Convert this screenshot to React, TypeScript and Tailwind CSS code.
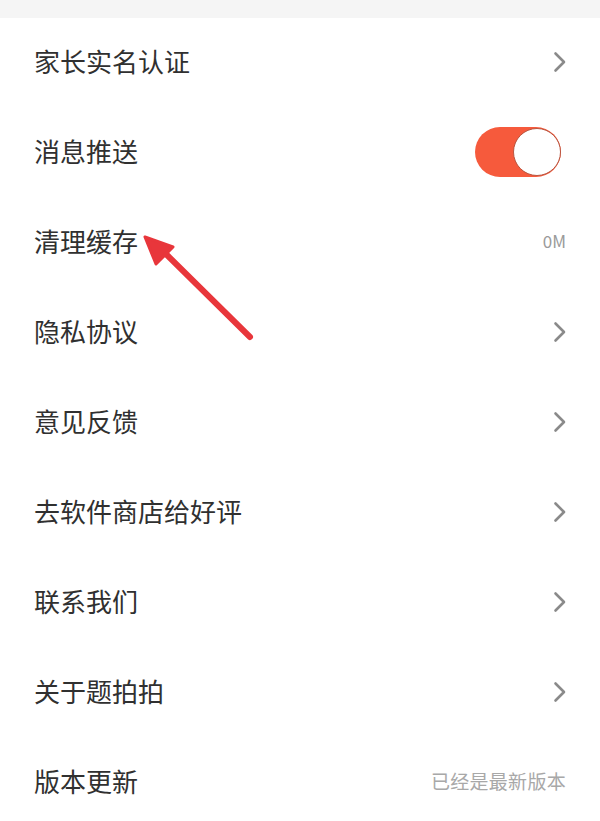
import React from "react";

type Row = {
  label: string;
  kind: "chevron" | "toggle" | "value";
  value?: string;
};

const rows: Row[] = [
  { label: "家长实名认证", kind: "chevron" },
  { label: "消息推送", kind: "toggle" },
  { label: "清理缓存", kind: "value", value: "0M" },
  { label: "隐私协议", kind: "chevron" },
  { label: "意见反馈", kind: "chevron" },
  { label: "去软件商店给好评", kind: "chevron" },
  { label: "联系我们", kind: "chevron" },
  { label: "关于题拍拍", kind: "chevron" },
  { label: "版本更新", kind: "value", value: "已经是最新版本" },
];

function Chevron() {
  return (
    <svg width="14" height="22" viewBox="0 0 14 22" className="mr-[-1px] mb-[2px]">
      <path
        d="M2.5 2.5 L11 11 L2.5 19.5"
        fill="none"
        stroke="#8a8a8a"
        strokeWidth="2.6"
        strokeLinecap="round"
        strokeLinejoin="round"
      />
    </svg>
  );
}

function Toggle() {
  return (
    <div className="flex h-[50px] w-[86px] items-center justify-end rounded-full bg-[#f65a3c] mr-[5px] mb-[2px]">
      <div className="h-[48px] w-[48px] rounded-full border-[1.5px] border-[#b9553f] bg-white" />
    </div>
  );
}

function RowItem({ row, index }: { row: Row; index: number }) {
  const last = index === rows.length - 1;
  return (
    <div className="relative flex h-[90px] shrink-0 items-center justify-between pl-[34px] pr-[34px]">
      <span className="-mt-[5px] text-[26px] text-[#303030]">{row.label}</span>
      {row.kind === "chevron" && <Chevron />}
      {row.kind === "toggle" && <Toggle />}
      {row.kind === "value" && (
        <span
          className={
            last
              ? "-mt-[4px] text-[19px] text-[#a8a8a8] tracking-[0.3px]"
              : "-mt-[4px] text-[17px] text-[#9a9a9a]"
          }
        >
          {row.value}
        </span>
      )}
    </div>
  );
}

// Red annotation arrow pointing at 清理缓存
function Arrow() {
  return (
    <svg
      className="pointer-events-none absolute left-0 top-0"
      width="600"
      height="821"
      viewBox="0 0 600 821"
    >
      <line
        x1="250"
        y1="337"
        x2="166"
        y2="254"
        stroke="#e8363b"
        strokeWidth="6"
        strokeLinecap="round"
      />
      <polygon points="145,237 173,247 156,264" fill="#e8363b" stroke="#e8363b" strokeWidth="3" strokeLinejoin="round" />
    </svg>
  );
}

export default function App() {
  return (
    <div
      className="relative flex h-[821px] w-[600px] flex-col overflow-hidden bg-white"
      style={{ fontFamily: '"Noto Sans CJK SC", "Noto Sans", sans-serif' }}
    >
      <div className="h-[18px] shrink-0 bg-[#f5f5f5]" />
      {rows.map((row, i) => (
        <RowItem key={row.label} row={row} index={i} />
      ))}
      <Arrow />
    </div>
  );
}
